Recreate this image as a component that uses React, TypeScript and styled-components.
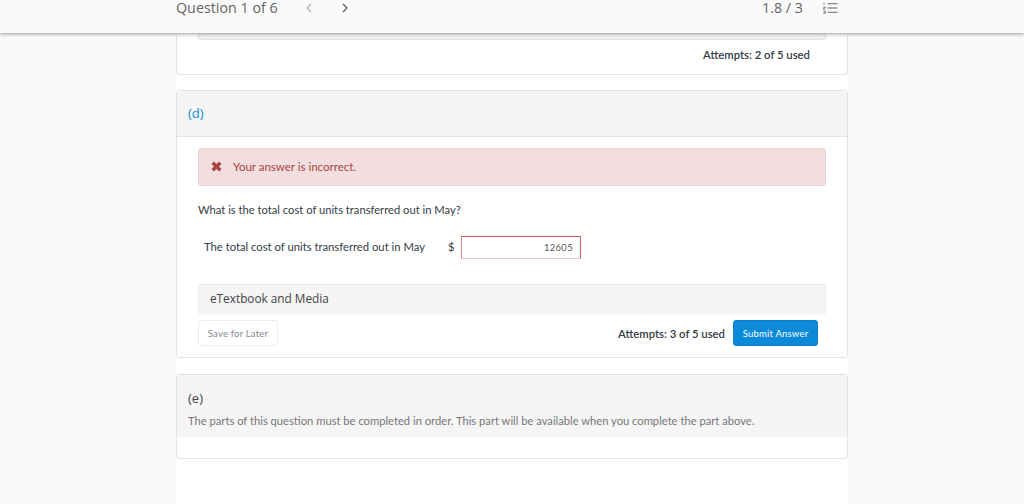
import { FC } from 'react';
import styled, { createGlobalStyle } from 'styled-components';

const GlobalStyle = createGlobalStyle`
  html, body {
    margin: 0;
    height: 100%;
    background: #fafafa;
    font-family: Lato, "Liberation Sans", sans-serif;
    overflow: hidden;
  }
`;

const ListIcon: FC = () => (
  <svg width="15" height="12" viewBox="0 0 15 12">
    <g stroke="#666" strokeWidth="1.1" fill="none">
      <path d="M4.5 1.8H14.5M4.5 6H14.5M4.5 10.2H14.5" />
      <path d="M1 .5V3M.3 5H2.3V6H.5V7.2H2.3M.4 9H2.4V11.4H.4M.6 10.2H2.4" strokeWidth=".7" />
    </g>
  </svg>
);

const CrossIcon: FC = () => (
  <svg width="11" height="11" viewBox="0 0 11 11">
    <path d="M1.7 1.7L9.3 9.3M9.3 1.7L1.7 9.3" stroke="#a94442" strokeWidth="3.4" fill="none" />
  </svg>
);

const Chevron: FC<{ flip?: boolean; color: string }> = ({ flip, color }) => (
  <svg width="6" height="10" viewBox="0 0 6 10">
    <path d={flip ? 'M5 1L1 5L5 9' : 'M1 1L5 5L1 9'} stroke={color} strokeWidth="1.1" fill="none" />
  </svg>
);

export default function App() {
  return <>
    <GlobalStyle />
    <Header>
      <HeaderInner>
        <QuestionTitle>Question 1 of 6</QuestionTitle>
        <ArrowSlot><Chevron flip color="#aaa" /></ArrowSlot>
        <ArrowSlot><Chevron color="#555" /></ArrowSlot>
        <Score>1.8 / 3</Score>
        <ListIcon />
      </HeaderInner>
    </Header>
    <Column>
      <TopCard>
        <ClippedPanel />
        <AttemptsTop>Attempts: 2 of 5 used</AttemptsTop>
      </TopCard>

      <Card>
        <CardHeading>(d)</CardHeading>
        <CardBody>
          <Alert>
            <CrossIcon />
            <span>Your answer is incorrect.</span>
          </Alert>
          <Prompt>What is the total cost of units transferred out in May?</Prompt>
          <AnswerRow>
            <AnswerLabel>The total cost of units transferred out in May</AnswerLabel>
            <Currency>$</Currency>
            <AnswerInput>12605</AnswerInput>
          </AnswerRow>
          <MediaPanel>eTextbook and Media</MediaPanel>
          <Actions>
            <SaveButton>Save for Later</SaveButton>
            <Attempts>Attempts: 3 of 5 used</Attempts>
            <SubmitButton>Submit Answer</SubmitButton>
          </Actions>
        </CardBody>
      </Card>

      <Card>
        <LockedHeading>
          <PartLabel>(e)</PartLabel>
          <LockedNote>The parts of this question must be completed in order. This part will be available when you complete the part above.</LockedNote>
        </LockedHeading>
        <LockedSpace />
      </Card>
    </Column>
  </>;
}

const Header = styled.header`
  position: relative;
  z-index: 2;
  height: 33px;
  background: #fafafa;
  box-shadow: 0 1px 4px rgba(0, 0, 0, 0.4);
`;

const HeaderInner = styled.div`
  display: flex;
  align-items: center;
  width: 662px;
  height: 15px;
  margin-left: 176px;
  color: #666;
`;

const QuestionTitle = styled.span`
  font-family: "Open Sans", sans-serif;
  font-size: 14.3px;
  width: 130px;
`;

const ArrowSlot = styled.span`
  display: flex;
  width: 36px;
`;

const Score = styled.span`
  font-family: "Open Sans", sans-serif;
  font-size: 14.3px;
  margin-left: auto;
  margin-right: 20px;
`;

const Column = styled.main`
  width: 672px;
  height: 471px;
  margin-left: 176px;
  background: #fff;
  display: flex;
  flex-direction: column;
  gap: 16px;
`;

const Card = styled.section`
  border: 1px solid #e3e3e3;
  border-radius: 3px;
  background: #fff;
`;

const TopCard = styled(Card)`
  border-top: 0;
  height: 41px;
  margin-bottom: -1px;
  padding: 0 21px;
`;

const ClippedPanel = styled.div`
  height: 6px;
  background: #f5f5f5;
  border: 1px solid #e3e3e3;
  border-top: 0;
  border-radius: 0 0 3px 3px;
`;

const AttemptsTop = styled.div`
  margin-top: 7px;
  text-align: right;
  padding-right: 16px;
  font-size: 11.3px;
  font-weight: 600;
  line-height: 15px;
  color: #333c45;
`;

const CardHeading = styled.h2`
  margin: 0;
  height: 45px;
  padding-left: 11px;
  background: #f5f5f5;
  border-bottom: 1px solid #e3e3e3;
  font-family: "Open Sans", sans-serif;
  font-size: 13px;
  font-weight: 400;
  line-height: 45px;
  color: #0a8ad8;
`;

const CardBody = styled.div`
  padding: 11px 21px 11px;
`;

const Alert = styled.div`
  display: flex;
  align-items: center;
  gap: 11px;
  height: 34px;
  padding: 0 0 2px 12px;
  background: #f2dede;
  border: 1px solid #eed3d3;
  border-radius: 3px;
  font-size: 11.5px;
  color: #a94442;
`;

const Prompt = styled.p`
  margin: 16px 0 0;
  font-size: 11.2px;
  line-height: 15px;
  color: #333c45;
`;

const AnswerRow = styled.div`
  display: flex;
  align-items: center;
  margin-top: 19px;
  padding-left: 6px;
  height: 23px;
  font-size: 11.25px;
  color: #333c45;
`;

const AnswerLabel = styled.span`
  width: 244px;
  padding-bottom: 2px;
`;

const Currency = styled.span`
  width: 13px;
  padding-bottom: 2px;
`;

const AnswerInput = styled.div`
  box-sizing: border-box;
  width: 120px;
  height: 23px;
  padding-right: 7px;
  border: 1px solid #c9605f;
  border-bottom-color: #ecc4c4;
  border-left-color: #d78d8d;
  background: #fff;
  text-align: right;
  font-size: 9.5px;
  line-height: 22px;
  letter-spacing: 0.3px;
  color: #555;
`;

const MediaPanel = styled.div`
  margin-top: 25px;
  height: 28px;
  padding-left: 11px;
  background: #f5f5f5;
  border: 1px solid #e8e8e8;
  border-bottom-color: #f0f0f0;
  border-radius: 3px;
  font-family: "Open Sans", sans-serif;
  font-size: 11.8px;
  line-height: 27px;
  color: #444;
`;

const Actions = styled.div`
  display: flex;
  align-items: center;
  margin-top: 6px;
  height: 26px;
  padding-right: 8px;
`;

const SaveButton = styled.button`
  width: 80px;
  height: 26px;
  padding: 0;
  background: #fff;
  border: 1px solid #ececec;
  border-radius: 3px;
  font-family: Lato, sans-serif;
  font-size: 9.5px;
  letter-spacing: 0.2px;
  color: #888;
`;

const Attempts = styled.span`
  margin-left: auto;
  margin-right: 8px;
  font-size: 11.3px;
  font-weight: 600;
  color: #333c45;
`;

const SubmitButton = styled.button`
  width: 85px;
  height: 26px;
  padding: 0;
  background: #0a8ad8;
  border: 1px solid #0a7fc8;
  border-radius: 3px;
  font-family: Lato, sans-serif;
  font-size: 9.5px;
  letter-spacing: 0.2px;
  color: #fff;
`;

const LockedHeading = styled.div`
  height: 62px;
  padding-left: 11px;
  background: #f5f5f5;
`;

const PartLabel = styled.div`
  padding-top: 15px;
  font-family: "Open Sans", sans-serif;
  font-size: 13px;
  line-height: 16px;
  color: #444;
`;

const LockedNote = styled.p`
  margin: 7px 0 0;
  font-size: 11.2px;
  line-height: 16px;
  color: #777;
`;

const LockedSpace = styled.div`
  height: 21px;
`;
